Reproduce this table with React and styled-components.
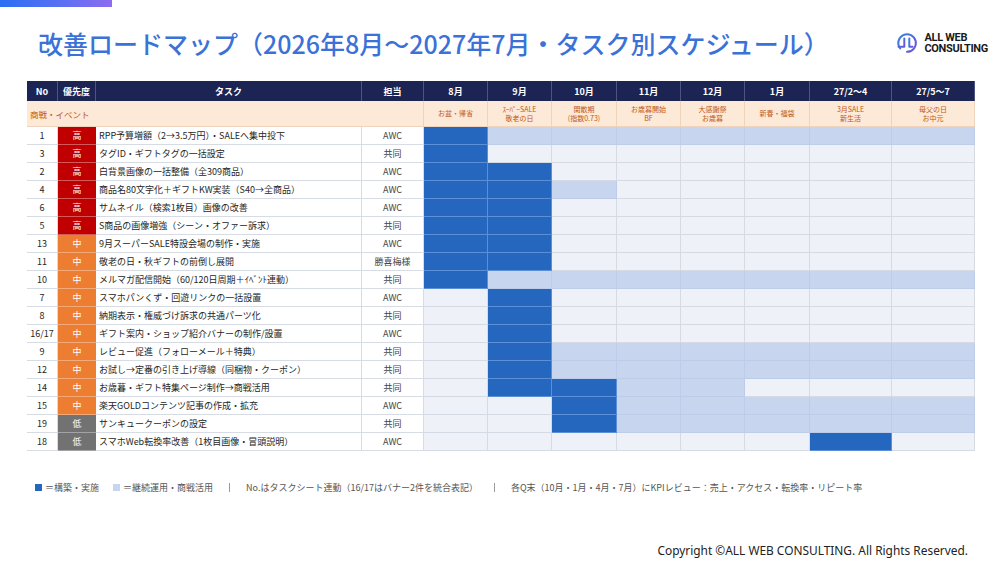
import React from "react";
import styled, { createGlobalStyle } from "styled-components";

const Global = createGlobalStyle`
  html, body { margin: 0; padding: 0; background: #fff; }
  body { font-family: "Noto Sans CJK JP", "Noto Sans", sans-serif; }
  * { box-sizing: border-box; }
`;

const Page = styled.div`
  width: 1000px;
  height: 563px;
  display: flex;
  flex-direction: column;
  overflow: hidden;
`;

const TopBar = styled.div`
  width: 112px;
  height: 7px;
  background: linear-gradient(90deg, #2b6ff3 0%, #5a70f2 55%, #8d6cf0 100%);
`;

const Header = styled.header`
  height: 72px;
  display: flex;
  align-items: center;
  justify-content: space-between;
  padding: 0 12px 0 38px;
`;

const Title = styled.h1`
  margin: 0;
  font-family: "Noto Sans CJK JP", sans-serif;
  font-weight: 500;
  font-size: 25px;
  letter-spacing: 0;
  color: #3a72d8;
  white-space: nowrap;
`;

const Logo = styled.div`
  display: flex;
  align-items: center;
  gap: 6px;
`;

const LogoText = styled.div`
  font-family: Roboto, "Liberation Sans", sans-serif;
  font-weight: 700;
  font-size: 11px;
  line-height: 11.5px;
  letter-spacing: -0.3px;
  color: #1a1a22;
  white-space: nowrap;
`;

const TableWrap = styled.div`
  padding: 2px 0 0 27px;
`;

const Grid = styled.div`
  display: grid;
  width: 948px;
  grid-template-columns: 31px 38px 266px 62px 64px 64px 65px 64px 64px 65px 82px 83px;
  grid-auto-rows: 18px;
  grid-template-rows: 20px 26px;
  font-size: 9px;
  color: #262626;
`;

const HeadCell = styled.div`
  background: #1c2454;
  color: #fff;
  font-weight: 700;
  font-size: 9px;
  display: flex;
  align-items: center;
  justify-content: center;
  border-right: 1px solid #4b557f;
  &:last-child { border-right: none; }
`;

const EventLabel = styled.div`
  grid-column: span 4;
  background: #fde9d8;
  color: #c05a14;
  font-size: 8.5px;
  display: flex;
  align-items: center;
  padding-left: 3px;
  border-right: 1px solid #efd3bd;
  border-bottom: 1px solid #efd3bd;
`;

const EventCell = styled.div`
  background: #fde9d8;
  color: #c05a14;
  font-size: 7px;
  line-height: 9px;
  display: flex;
  flex-direction: column;
  align-items: center;
  justify-content: center;
  text-align: center;
  border-right: 1px solid #efd3bd;
  border-bottom: 1px solid #efd3bd;
`;

const Cell = styled.div`
  background: #fff;
  display: flex;
  align-items: center;
  justify-content: ${(p) => (p.$left ? "flex-start" : "center")};
  padding-left: ${(p) => (p.$left ? "3px" : "0")};
  border-right: 1px solid #d7dce4;
  border-bottom: 1px solid #d7dce4;
  white-space: nowrap;
  overflow: hidden;
  color: ${(p) => (p.$muted ? "#444" : "#262626")};
`;

const prioColors = { 高: "#c00000", 中: "#ed7d31", 低: "#727272" };

const PrioCell = styled.div`
  background: ${(p) => prioColors[p.$level]};
  color: #fff;
  display: flex;
  align-items: center;
  justify-content: center;
  border-bottom: 1px solid rgba(255, 255, 255, 0.35);
`;

const ganttStyles = {
  D: { bg: "#2566bf", line: "#5b90d8" },
  L: { bg: "#c7d5ee", line: "#bdcce8" },
  E: { bg: "#eef2f8", line: "#d5dbe5" },
};

const GanttCell = styled.div`
  background: ${(p) => ganttStyles[p.$kind].bg};
  border-right: 1px solid ${(p) => ganttStyles[p.$kind].line};
  border-bottom: 1px solid ${(p) => ganttStyles[p.$kind].line};
`;

const Legend = styled.div`
  margin-top: 29px;
  padding-left: 35px;
  height: 14px;
  display: flex;
  align-items: center;
  font-size: 9px;
  color: #555;
  white-space: nowrap;
`;

const Swatch = styled.span`
  width: 7px;
  height: 7px;
  background: ${(p) => p.$color};
  margin-right: 3px;
  display: inline-block;
`;

const LegendItem = styled.span`
  display: flex;
  align-items: center;
  margin-right: ${(p) => p.$gap || 0}px;
`;

const Sep = styled.span`
  width: 1px;
  height: 9px;
  background: #9a9a9a;
  margin: 0 16px;
`;

const Footer = styled.footer`
  margin-top: auto;
  padding: 0 32px 5px 0;
  display: flex;
  justify-content: flex-end;
  font-family: "Noto Sans", "Open Sans", sans-serif;
  font-size: 11.9px;
  color: #222;
  line-height: 16px;
`;

const months = ["8月", "9月", "10月", "11月", "12月", "1月", "27/2～4", "27/5～7"];
const events = [
  ["お盆・帰省"],
  ["ｽｰﾊﾟｰSALE", "敬老の日"],
  ["閑散期", "(指数0.73)"],
  ["お歳暮開始", "BF"],
  ["大感謝祭", "お歳暮"],
  ["新春・福袋"],
  ["3月SALE", "新生活"],
  ["母父の日", "お中元"],
];

const rows = [
  ["1", "高", "RPP予算増額（2→3.5万円）・SALEへ集中投下", "AWC", "DLLLLLLL"],
  ["3", "高", "タグID・ギフトタグの一括設定", "共同", "DEEEEEEE"],
  ["2", "高", "白背景画像の一括整備（全309商品）", "AWC", "DDEEEEEE"],
  ["4", "高", "商品名80文字化＋ギフトKW実装（S40→全商品）", "AWC", "DDLEEEEE"],
  ["6", "高", "サムネイル（検索1枚目）画像の改善", "AWC", "DDEEEEEE"],
  ["5", "高", "S商品の画像増強（シーン・オファー訴求）", "共同", "DDEEEEEE"],
  ["13", "中", "9月スーパーSALE特設会場の制作・実施", "AWC", "DDEEEEEE"],
  ["11", "中", "敬老の日・秋ギフトの前倒し展開", "勝喜梅様", "DDEEEEEE"],
  ["10", "中", "メルマガ配信開始（60/120日周期＋ｲﾍﾞﾝﾄ連動）", "共同", "DLLLLLLL"],
  ["7", "中", "スマホパンくず・回遊リンクの一括設置", "AWC", "EDEEEEEE"],
  ["8", "中", "納期表示・権威づけ訴求の共通パーツ化", "共同", "EDEEEEEE"],
  ["16/17", "中", "ギフト案内・ショップ紹介バナーの制作/設置", "AWC", "EDEEEEEE"],
  ["9", "中", "レビュー促進（フォローメール＋特典）", "共同", "EDLLLLLL"],
  ["12", "中", "お試し→定番の引き上げ導線（同梱物・クーポン）", "共同", "EDLLLLLL"],
  ["14", "中", "お歳暮・ギフト特集ページ制作→商戦活用", "共同", "EDDLLEEE"],
  ["15", "中", "楽天GOLDコンテンツ記事の作成・拡充", "AWC", "EEDLLLLL"],
  ["19", "低", "サンキュークーポンの設定", "共同", "EEDLLLLL"],
  ["18", "低", "スマホWeb転換率改善（1枚目画像・冒頭説明）", "AWC", "EEEEEEDE"],
];

function LogoMark() {
  return (
    <svg width="22" height="22" viewBox="0 0 22 22">
      <defs>
        <linearGradient id="lg" x1="0" y1="0" x2="1" y2="1">
          <stop offset="0" stopColor="#3a7fe0" />
          <stop offset="1" stopColor="#6a55d6" />
        </linearGradient>
      </defs>
      <path d="M4.2 16.5 A8.8 8.8 0 1 1 11 19.8" fill="none" stroke="url(#lg)" strokeWidth="2" strokeLinecap="round" />
      <path d="M8.3 6.5 V14.8 H2.5" fill="none" stroke="url(#lg)" strokeWidth="2" strokeLinecap="round" strokeLinejoin="round" />
      <path d="M13.3 6.5 V14.8 H16.5" fill="none" stroke="url(#lg)" strokeWidth="2" strokeLinecap="round" strokeLinejoin="round" />
    </svg>
  );
}

export default function App() {
  return (
    <Page>
      <Global />
      <TopBar />
      <Header>
        <Title>改善ロードマップ（2026年8月～2027年7月・タスク別スケジュール）</Title>
        <Logo>
          <LogoMark />
          <LogoText>
            ALL WEB
            <br />
            CONSULTING
          </LogoText>
        </Logo>
      </Header>
      <TableWrap>
        <Grid>
          <HeadCell>No</HeadCell>
          <HeadCell>優先度</HeadCell>
          <HeadCell>タスク</HeadCell>
          <HeadCell>担当</HeadCell>
          {months.map((m) => (
            <HeadCell key={m}>{m}</HeadCell>
          ))}
          <EventLabel>商戦・イベント</EventLabel>
          {events.map((lines, i) => (
            <EventCell key={i}>
              {lines.map((l) => (
                <span key={l}>{l}</span>
              ))}
            </EventCell>
          ))}
          {rows.map(([no, prio, task, owner, gantt]) => (
            <React.Fragment key={no}>
              <Cell>{no}</Cell>
              <PrioCell $level={prio}>{prio}</PrioCell>
              <Cell $left>{task}</Cell>
              <Cell $muted>{owner}</Cell>
              {gantt.split("").map((k, i) => (
                <GanttCell key={i} $kind={k} />
              ))}
            </React.Fragment>
          ))}
        </Grid>
      </TableWrap>
      <Legend>
        <LegendItem $gap={14}>
          <Swatch $color="#2566bf" />＝構築・実施
        </LegendItem>
        <LegendItem>
          <Swatch $color="#c7d5ee" />＝継続運用・商戦活用
        </LegendItem>
        <Sep />
        <span>No.はタスクシート連動（16/17はバナー2件を統合表記）</span>
        <Sep />
        <span>各Q末（10月・1月・4月・7月）にKPIレビュー：売上・アクセス・転換率・リピート率</span>
      </Legend>
      <Footer>Copyright ©ALL WEB CONSULTING. All Rights Reserved.</Footer>
    </Page>
  );
}
